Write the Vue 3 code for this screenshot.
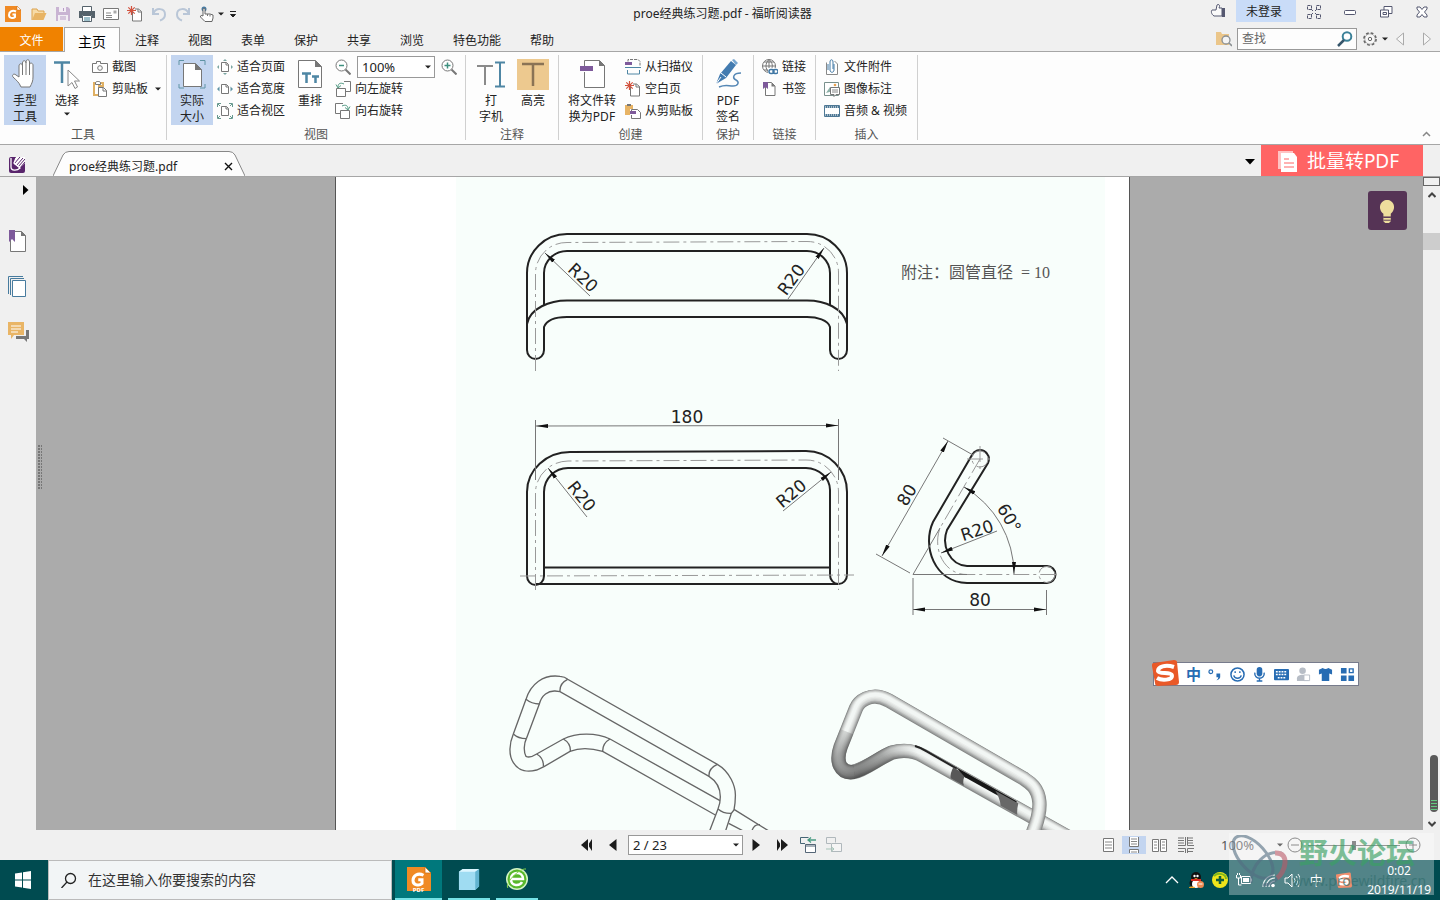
<script setup>
import { h, ref } from 'vue'

// icon markup, 16x16 unless a size is given below
const page = '<path d="M3.500 1.500h6l3.500 3.500v9.500h-9.500z" fill="#fff" stroke="#777"/><path d="M9.500 1.500v4h3.500z" fill="#777"/>'
const star = '<path d="M4.500 0v9M0 4.500h9M1.300 1.300l6.400 6.400M7.700 1.300L1.300 7.700" stroke="#d2533f" stroke-width="1.200"/>'
const icons = {
  foxit: '<path d="M0 0h12l4 4v12H0z" fill="#f08a24"/><path d="M12 0v4h4z" fill="#fff" stroke="#c76b12" stroke-width=".5"/><path d="M11 5.500C7 3.500 4 6 4 9s4 4 6 2V8.500H7.500" fill="none" stroke="#fff" stroke-width="2"/>',
  folder: '<path d="M1 14V3h5l1 2h6v3" fill="#f7dba7" stroke="#dca34f"/><path d="M1 14l3-7h11.500l-3 7z" fill="#e8b465"/>',
  save: '<path d="M1 1h12l2 2v12H1z" fill="#c9b4d3"/><path d="M4 1h7v5H4zM3 9h10v6H3z" fill="#f2eef4"/><path d="M8.500 2v3M5 11h6M5 13h6" stroke="#b79dc4"/>',
  print: '<path d="M3.500 5V.500h9V5" fill="#fff" stroke="#55626b"/><path d="M0 5h16v7h-3V9H3v3H0z" fill="#55626b"/><path d="M3.500 9.500h9v6h-9z" fill="#fff" stroke="#55626b"/><path d="M5 12h6M5 14h6" stroke="#3f8196"/>',
  mail: '<path d="M.500 2.500h15v11H.500z" fill="#fff" stroke="#777"/><path d="M10.500 4.500h3v3h-3z" fill="#aaa"/><path d="M3 7h5M3 9.500h6M3 11.500h6" stroke="#888"/>',
  fresh: '<path d="M5.500 5.500V15h9V5.500L11.500 3H8" fill="#fff" stroke="#777"/><path d="M11 3v3h3.500" fill="none" stroke="#777"/>' + star,
  undo: '<path d="M2 2v6h6" fill="none" stroke="#b9c6d7" stroke-width="2"/><path d="M2.500 7.500C5 1 14 2 14 8.500c0 3-2 5-5 6" fill="none" stroke="#b9c6d7" stroke-width="2"/>',
  redo: '<path d="M14 2v6H8" fill="none" stroke="#b9c6d7" stroke-width="2"/><path d="M13.500 7.500C11 1 2 2 2 8.500c0 3 2 5 5 6" fill="none" stroke="#b9c6d7" stroke-width="2"/>',
  touch: '<circle cx="5" cy="3" r="2.500" fill="#477aa2"/><path d="M4 10V3.500c0-1.500 2-1.500 2 0V8h5l3 1v3l-1 3.500H6L1.500 11C1 9.500 2.500 9 4 10z" fill="#fff" stroke="#666"/><path d="M8.500 8v2M11 8.500v2" stroke="#777"/>',
  caret: '<path d="M4 6h8l-4 4z" fill="#222"/>',
  caretBar: '<path d="M5 5.500h6M5.500 8.500h5l-2.500 2.500z" stroke="#222" fill="#222" stroke-width="1"/>',
  thumb: '<path d="M2 7h4L7 2c1-1 3-.5 2.500 1.500L9 5h3v8H4c-3-2-3-5-2-6z" fill="#fafafa" stroke="#555870"/><path d="M12 5h3v9h-3z" fill="#555870"/>',
  skin: '<path d="M1.500 1.500h4v4h-4zM10.500 1.500h4v4h-4zM1.500 10.500h4v4h-4zM10.500 10.500h4v4h-4z" fill="none" stroke="#555870" stroke-dasharray="3 1"/><path d="M5 5l2 2M11 5L9 7M5 11l2-2M11 11L9 9" stroke="#555870"/>',
  min: '<rect x="2.500" y="6.500" width="11" height="4" rx="1" fill="#fff" stroke="#555870"/>',
  max: '<path d="M6 2.500h8v7h-8z" fill="#fff" stroke="#555870"/><path d="M2.500 6h8v7h-8zM5 8.500h3.500v2H5z" fill="#fff" stroke="#555870"/>',
  close: '<path d="M3 3h3l2 2.500L10 3h3v2l-2.500 3L13 11v2h-3l-2-2.500L6 13H3v-2l2.500-3L3 5z" fill="#fff" stroke="#555870"/>',
  folderFind: '<path d="M0 1h5l1 2h7v11H0z" fill="#ebc68a"/><circle cx="10" cy="9" r="4" fill="#f4f4f4" stroke="#8a8f92" stroke-width="1.300"/><path d="M13 12l3 3" stroke="#8a8f92" stroke-width="1.600"/>',
  find: '<circle cx="10" cy="5.500" r="4.300" fill="#fff" stroke="#3b8198" stroke-width="2"/><path d="M7 9l-6 6" stroke="#36566b" stroke-width="2.500"/>',
  gear: '<circle cx="8" cy="8" r="5.800" fill="#f7f7f7" stroke="#666" stroke-width="2.200" stroke-dasharray="2.600 1.955"/><circle cx="8" cy="8" r="5.200" fill="#f7f7f7" stroke="#888" stroke-width=".6"/><circle cx="8" cy="8" r="1.700" fill="none" stroke="#666"/>',
  prev: '<path d="M11.500 2v12l-7-6z" fill="#f6f6f6" stroke="#aaa"/>',
  next: '<path d="M4.500 2v12l7-6z" fill="#f6f6f6" stroke="#aaa"/>',
  hand: '<path d="M10 19V8c0-3 3.500-3 3.500 0V5c0-3 3.500-3 3.500 0V4c0-3 3.500-3 3.500 0v3c0-3 3.500-2 3.500 0v12c0 4-1 6-3 10H12c-2-5-5-7-8-10-1.500-2 1-4 3-2z" fill="#fff" stroke="#777"/><path d="M13.500 8v9M17 5v12M20.500 7v10" stroke="#777" fill="none"/>',
  select: '<path d="M3 4.500h16M11 4.500V25" stroke="#4e86a4" stroke-width="2.500" fill="none"/><path d="M17 12v16l4-3.500 3 6 2.500-1.500-3-6h5z" fill="#fff" stroke="#888"/>',
  camera: '<path d="M.500 4.500h4v-2h4v2h7v9H.500z" fill="#fff" stroke="#777"/><circle cx="8" cy="9" r="2.300" fill="#fff" stroke="#777"/>',
  clip: '<path d="M2 2h9v3H7v9H2z" fill="#fff" stroke="#dfb064" stroke-width="2"/><path d="M3.500 3.500V2C3.500-.200 8.500-.200 8.500 2v1.500z" fill="#fff" stroke="#777"/><path d="M6.500 6.500h5l3 3v6h-8z" fill="#fff" stroke="#777"/><path d="M11 6.500v3.500h3.500" fill="none" stroke="#777"/>',
  actual: '<path d="M3 7V2.500h5M24 2.500h5V7M3 26v4h5M24 30h5v-4" fill="none" stroke="#5f93a4"/><path d="M7.500 5.500h12l6 6v17h-18z" fill="#fff" stroke="#777"/><path d="M19 5v7h7z" fill="#777"/>',
  fitPage: '<path d="M4.500 3.500h5l2 2v7h-7z" fill="#fff" stroke="#777"/><path d="M9 3.500V6h2.500" fill="none" stroke="#777"/><path d="M6 2l2-2 2 2M6 14l2 2 2-2M2 6L0 8l2 2M14 6l2 2-2 2" fill="#7ba6a2"/>',
  fitWidth: '<path d="M4.500 3.500h5l2 2v7h-7z" fill="#fff" stroke="#777"/><path d="M9 3.500V6h2.500" fill="none" stroke="#777"/><path d="M2.500 5.500L0 8l2.500 2.500M13.500 5.500L16 8l-2.500 2.500" fill="#5f93a4"/>',
  fitView: '<path d="M4.500 3.500h5l2 2v7h-7z" fill="#fff" stroke="#777"/><path d="M9 3.500V6h2.500" fill="none" stroke="#777"/><path d="M.500 4V.500H4M12 .500h3.500V4M.500 12v3.500H4M12 15.500h3.500V12M1 1l2 2M15 1l-2 2M1 15l2-2M15 15l-2-2" fill="none" stroke="#66998f"/>',
  reflow: '<path d="M4.500 2.500h17l6 6v21h-23z" fill="#fff" stroke="#777"/><path d="M21 2v7h7z" fill="#777"/><path d="M8 15.500h9M12.500 15v10M18 18.500h7M21.500 18v7" stroke="#4e86a4" stroke-width="2.500"/>',
  zoomOut: '<circle cx="6.500" cy="6.500" r="5.500" fill="#fff" stroke="#777"/><path d="M4 6.500h5" stroke="#3f907f" stroke-width="1.500"/><path d="M10.500 10.500l5 5" stroke="#777" stroke-width="2"/>',
  zoomIn: '<circle cx="6.500" cy="6.500" r="5.500" fill="#fff" stroke="#777"/><path d="M3.500 6.500h6M6.500 3.500v6" stroke="#3f907f" stroke-width="1.500"/><path d="M10.500 10.500l5 5" stroke="#777" stroke-width="2"/>',
  rotL: '<path d="M9 .500h6.500v10H11" fill="#fff" stroke="#777"/><path d="M1.500 7.500h9v8h-9z" fill="#fff" stroke="#777"/><path d="M3 6C3 2 6 1.500 9 3M1 3.500L3 7l3-2.500" fill="none" stroke="#529a83"/>',
  rotR: '<path d="M8 .500H.500v10H5" fill="#fff" stroke="#777"/><path d="M5.500 7.500h9v8h-9z" fill="#fff" stroke="#777"/><path d="M13 6c0-4-3-4.500-6-3M15 3.500L13 7l-3-2.500" fill="none" stroke="#529a83"/>',
  typewriter: '<path d="M2 8h16M10 8v19" stroke="#8a8a8a" stroke-width="2"/><path d="M20 4.500h10M20 28.500h10M25 4v25" stroke="#4e86a4" stroke-width="2"/>',
  highlight: '<path d="M0 1h32v31H0z" fill="#edc98f"/><path d="M5 6h22M16 6v22" stroke="#8a7355" stroke-width="2.500"/>',
  convert: '<path d="M8.500 10V2.500h15l5 5v22h-20V14" fill="#fff" stroke="#777"/><path d="M23 2v6h6z" fill="#777"/><path d="M4 8h13v5H4z" fill="#7e5a9b"/>',
  scanner: '<path d="M3 2.500V.500h10l2 2v4" fill="none" stroke="#777" stroke-dasharray="3 1"/><path d="M0 3h7v3H0z" fill="#7e5a9b"/><path d="M0 8.500h16M2.500 11v4h12v-4" fill="none" stroke="#4e86a4"/>',
  fromClip: '<path d="M0 2h8v4H5v6H0z" fill="#e8b465"/><path d="M2 1h4v2H2z" fill="#777"/><path d="M6.500 8V6.500h6l3 3v6h-9V12" fill="#fff" stroke="#777"/><path d="M5 8h6v3H5z" fill="#7e5a9b"/>',
  sign: '<path d="M19 3l5 4-10 13-10 6 4-10z" fill="#437bb0"/><path d="M20 2l2-1 4 4-2 2z" fill="#76a5cf"/><path d="M9 15l5 4M4 26l5-7" stroke="#fff"/><path d="M29 15c-8 0-9 5-5 7s2 6-3 6-7-2-14 1" fill="none" stroke="#5587b5" stroke-width="1.500"/>',
  link: '<circle cx="7" cy="7" r="6.500" fill="#fff" stroke="#777"/><path d="M.500 7h13M7 .500v13M2 3h10M2 11h7M7 .500C3 4 3 10 7 13.500M7 .500C11 4 11 8 9 11" fill="none" stroke="#777"/><path d="M6 9h11v7H6z" fill="#fff"/><rect x="7" y="10.500" width="5" height="4" rx="2" fill="none" stroke="#4178a5" stroke-width="1.500"/><rect x="11" y="10.500" width="5" height="4" rx="2" fill="none" stroke="#4178a5" stroke-width="1.500"/>',
  bookmark: page + '<path d="M1 1h5v7L3.500 6 1 8z" fill="#7e5a9b"/>',
  attach: '<path d="M2.500 3.500v12h11V5l-3-3" fill="#fff" stroke="#888"/><path d="M10 5v6c0 3-4 3-4 0V3c0-3 3-3 3 0v7M4 5v6" fill="none" stroke="#4178a5"/>',
  image: '<path d="M.500 1.500h14v13H.500z" fill="#fff" stroke="#79908c"/><path d="M2 12l4-6 3 4z" fill="#8cb0a7"/><circle cx="11" cy="4" r="1.300" fill="#e8a14f"/><path d="M6.500 6.500h9v7H12l-2 2v-2H6.500z" fill="#fff" stroke="#777"/><path d="M8 9h6M8 11h6" stroke="#888"/>',
  film: '<path d="M.500 2.500h15v11H.500z" fill="#fff" stroke="#4e7895"/><path d="M1 4h14M1 12h14" stroke="#4e7895" stroke-width="2"/><path d="M1 4h14M1 12h14" stroke="#fff" stroke-dasharray="1 1"/>',
  phantom: '<rect width="16" height="16" rx="2" fill="#59256c"/><path d="M7 0h9v6l-5 5-6-4z" fill="#fff"/><path d="M5 7l6-7M7 9l7-8M9 10l7-8M11 11l5-6" stroke="#59256c"/><path d="M2 1v9c0 4 6 4 9 1L5 6l2-5" fill="none" stroke="#fff" stroke-width="1.300"/>',
  pages: '<path d="M.500 18V.500H15M2.500 19V2.500H16" fill="none" stroke="#477b9e"/><path d="M4.500 4.500h13v16h-13z" fill="#fff" stroke="#477b9e"/>',
  sideMark: '<path d="M2.500 1.500h11l4 4v16h-15z" fill="#fff" stroke="#777"/><path d="M13 1v5h5z" fill="#777"/><path d="M1 0h6v12l-3-3-3 3z" fill="#7e5a9b"/>',
  comments: '<path d="M0 0h16v13H6l-3 4v-4H0z" fill="#e9b566"/><path d="M3 4h10M3 7h10M3 10h7" stroke="#fff"/><path d="M18 8h3v9h-2v3l-3-3H8v-3h10z" fill="#777"/>',
  first: '<path d="M9 2v12L2 8z" fill="#1c1c1c"/><path d="M13 2v12l-4-6z" fill="#1c1c1c"/><path d="M9.500 2v12" stroke="#f0f0f0"/>',
  back: '<path d="M11.500 2v12L4 8z" fill="#1c1c1c"/>',
  forward: '<path d="M4.500 2v12L12 8z" fill="#1c1c1c"/>',
  last: '<path d="M7 2v12l7-6zM3 2v12l4-6z" fill="#1c1c1c"/><path d="M6.500 2v12" stroke="#f0f0f0"/>',
  viewBack: '<path d="M5 6.500H.500v-6h8" fill="none" stroke="#456575"/><path d="M5.500 7.500h10v8h-10z" fill="#fff" stroke="#567"/><path d="M5 9h11" stroke="#567"/><path d="M16 3H8M11 .500L8 3l3 2.500" fill="none" stroke="#489b82" stroke-width="1.300"/>',
  viewNext: '<path d="M5 6.500H.500v-6h9v5" fill="none" stroke="#b0b8bc"/><path d="M5.500 6.500h10v8h-10z" fill="#f5f5f5" stroke="#b0b8bc"/><path d="M0 12h8M5 9.500L8 12l-3 2.500" fill="none" stroke="#a7c4b8"/>',
  single: '<path d="M3.500 1.500h10v13h-10z" fill="#fff" stroke="#777"/><path d="M5 5h7M5 8h7M5 11h7" stroke="#888"/>',
  continuous: '<path d="M3.500 0v9.500h9V0M3.500 16v-3.500h9V16" fill="#fff" stroke="#777"/><path d="M5 2h6M5 4.500h6M5 7h6M5 15h6" stroke="#888"/>',
  facing: '<path d="M.500 2.500h6v12h-6zM8.500 2.500h6v12h-6z" fill="#fff" stroke="#777"/><path d="M2 5h3M2 8h3M2 11h3M10 5h3M10 8h3M10 11h3" stroke="#888"/>',
  facingCont: '<path d="M0 1h6M0 3.500h6M0 6h6M0 8.500h7.500V0M9.500 0v8.500H16M10 1h5M10 3.500h5M10 6h5M0 11.500h7.500V16M16 11.500H9.500V16M0 14.500h6M10 14.500h5" fill="none" stroke="#777"/>',
  bulb: '<path d="M8 19v-3C1 10 5 1 12 1s11 9 4 15v3z" fill="#eedd9d"/><path d="M8 20h8v4l-2 2h-4l-2-2z" fill="#eedd9d"/><path d="M8 20h8M8 23h8" stroke="#553355"/>',
  batch: '<path d="M1 1h15v18H1z" fill="#ffc3c3"/><path d="M4 3h13l3 4v15H4z" fill="#fff"/><path d="M7 9h5M7 13h10M7 17h10" stroke="#ff6464"/>',
  windows: '<path d="M0 2.500l7-1v7H0zM8 1.300L16 0v8.500H8zM0 9.500h7v7l-7-1zM8 9.500h8V18l-8-1.300z" fill="#fff"/>',
  search: '<circle cx="9.500" cy="6.500" r="5" fill="none" stroke="#222" stroke-width="1.300"/><path d="M6 10l-5.500 6" stroke="#222" stroke-width="1.300"/>',
  cube: '<path d="M2 5l4-3h17v18l-4 4H2z" fill="#9fdcf2"/><path d="M2 5l4-3h17l-4 3z" fill="#dcf6ff"/><path d="M19 5l4-3v18l-4 4z" fill="#62b4d0"/>',
  ebrowser: '<circle cx="12" cy="12" r="11" fill="#d4f5c6"/><circle cx="12" cy="12" r="9.500" fill="#58b72b"/><path d="M6 12h12c0-8-12-8-12 0s9 7 11 3" fill="none" stroke="#fff" stroke-width="2.500"/><path d="M3 21C-1 17 14 1 21 2" fill="none" stroke="#88d44c"/>',
  up: '<path d="M2 11l6-6 6 6" fill="none" stroke="#fff" stroke-width="1.300"/>',
  qq: '<ellipse cx="8" cy="5" rx="5" ry="5" fill="#111"/><ellipse cx="8" cy="11" rx="6.500" ry="5" fill="#111"/><ellipse cx="8" cy="12" rx="4" ry="4" fill="#fff"/><circle cx="6.500" cy="4" r="1.200" fill="#fff"/><circle cx="9.500" cy="4" r="1.200" fill="#fff"/><path d="M3 7h10v2H3z" fill="#d62c22"/><path d="M6 6h4l-2 1z" fill="#f5a623"/><ellipse cx="4" cy="15.500" rx="3" ry="1" fill="#f5a623"/><circle cx="12.500" cy="12.500" r="3.500" fill="#ef8a52"/><path d="M10.500 12h4" stroke="#fff"/>',
  shield: '<circle cx="8" cy="8" r="8" fill="#efe51b"/><path d="M2 4c4-4 12-2 12 3" fill="none" stroke="#83b81b" stroke-width="2"/><path d="M8 4v8M4 8h8" stroke="#125c3b" stroke-width="2.500"/>',
  battery: '<path d="M5.500 4.500h9v7h-9zM15.500 6.500v3" fill="none" stroke="#fff"/><path d="M7 6h6v4H7z" fill="#fff"/><path d="M.500 3v3h4V3M2.500 6v7h3M1.500 1v2M3.500 1v2" fill="none" stroke="#fff"/>',
  wifi: '<path d="M3 15C3 8 8 3 15 3M6 15c0-5 4-9 9-9M9 15c0-3 3-6 6-6" fill="none" stroke="#e5eeee" stroke-width="1.200"/><circle cx="13" cy="13.500" r="1.800" fill="#fff"/>',
  volume: '<path d="M1 6v5h3l4 4V2L4 6z" fill="none" stroke="#fff"/><path d="M10 6q2 2.500 0 5M12 4q3.500 4.500 0 9M14 2q5 6.500 0 13" fill="none" stroke="#dce8e8"/>',
  sogou: '<path d="M2 4l20-3c2 0 3 1 3 2l2 20c0 2-1 3-3 3L6 27c-2 0-3-1-3-3L0 7c0-2 0-3 2-3z" fill="#e95928"/><path d="M22 8C13 5 6 8 6 12c1 4 14 0 14 5 0 4-10 5-15 2" fill="none" stroke="#fff" stroke-width="4"/>',
  punct: '<circle cx="3" cy="5" r="2" fill="none" stroke="#276cb3" stroke-width="1.300"/><path d="M9 7h4v4q-1 3-4 3 2-1 2-3H9z" fill="#276cb3"/>',
  smile: '<circle cx="8" cy="8" r="7" fill="none" stroke="#276cb3" stroke-width="1.600"/><path d="M5.500 4.500v2M10.500 4.500v2M4 9c1 4 7 4 8 0" fill="none" stroke="#276cb3" stroke-width="1.500"/>',
  mic: '<rect x="5" y="0" width="6" height="10" rx="3" fill="#276cb3"/><path d="M3 6c-1 8 11 8 10 0M8 12v3M5 15h6" fill="none" stroke="#276cb3" stroke-width="1.500"/>',
  keyboard: '<rect x="0" y="2" width="16" height="12" rx="1" fill="#276cb3"/><path d="M2 5h12M2 8h12M4 11.500h8" stroke="#fff" stroke-width="1.500" stroke-dasharray="2 1"/>',
  person: '<circle cx="7" cy="4" r="3.500" fill="#b7bdc6"/><path d="M1 15v-3c0-5 12-5 12 0v3z" fill="#b7bdc6"/><path d="M8.500 8.500h6v6h-6z" fill="#fff" stroke="#b7bdc6"/>',
  shirt: '<path d="M1 3l4-2q3 2 6 0l4 2v5l-3-1v8H4V7L1 8z" fill="#276cb3"/>',
  grid: '<path d="M1 1h6v6H1zM1 9h6v6H1zM9 9h6v6H9z" fill="#276cb3"/><path d="M10 2h4v4h-4z" fill="none" stroke="#276cb3" stroke-width="1.500"/>',
}

const Icon = ({ name, size = 16, box = 16 }) =>
  h('svg', { width: size, height: size, viewBox: `0 0 ${box} ${box}`, 'aria-hidden': 'true', innerHTML: icons[name] })
Icon.props = ['name', 'size', 'box']

const quick = ['folder', 'save', 'print', 'mail', 'fresh', 'undo', 'redo', 'touch']
const tabs = ['主页', '注释', '视图', '表单', '保护', '共享', '浏览', '特色功能', '帮助']
const activeTab = ref('主页')
const zoom = ref('100%')
const pageNo = ref('2 / 23')
const zoomLevel = ref(50)

const imeTools = ['punct', 'smile', 'mic', 'keyboard', 'person', 'shirt', 'grid']
const layouts = ['single', 'continuous', 'facing', 'facingCont']

// strokes from the rim of the tube to its highlight: width, colour, shift up
const shades = [
  [43, '#858786', 0], [39, '#9b9d9c', 1], [35, '#b0b2b1', 2], [31, '#c2c4c3', 3],
  [27, '#d1d4d2', 3], [22, '#dee1df', 4], [17, '#e9ecea', 5], [11, '#f2f6f4', 6],
]
const lowerTube = 'M125 306C165 300 205 265 245 248C280 238 315 244 340 258L780 504'
const upperTube = 'M668 490C688 440 690 415 688 395C684 350 655 335 640 325L235 91C180 62 145 98 138 115L92 230C76 275 90 312 132 306'
</script>

<template>
  <div class="app">
    <header class="titlebar">
      <div class="quick">
        <Icon name="foxit" class="logo" />
        <button v-for="q in quick" :key="q" :aria-label="q"><Icon :name="q" /></button>
        <button class="slim" aria-label="more"><Icon name="caret" size="12" /></button>
        <button class="slim" aria-label="customize"><Icon name="caretBar" /></button>
      </div>
      <h1>proe经典练习题.pdf - 福昕阅读器</h1>
      <div class="window">
        <button aria-label="like"><Icon name="thumb" /></button>
        <button class="login">未登录</button>
        <button v-for="w in ['skin', 'min', 'max', 'close']" :key="w" class="win" :aria-label="w"><Icon :name="w" /></button>
      </div>
    </header>

    <nav class="tabs">
      <button class="file">文件</button>
      <button v-for="t in tabs" :key="t" class="tab" :class="{ active: t == activeTab }" @click="activeTab = t">{{ t }}</button>
      <div class="tools">
        <button aria-label="folder search"><Icon name="folderFind" /></button>
        <div class="find">
          <input type="text" placeholder="查找" aria-label="查找" />
          <button aria-label="search"><Icon name="find" /></button>
        </div>
        <button aria-label="settings"><Icon name="gear" /></button>
        <button aria-label="settings menu"><Icon name="caret" size="12" /></button>
        <button aria-label="previous"><Icon name="prev" /></button>
        <button class="nextbtn" aria-label="next"><Icon name="next" /></button>
      </div>
    </nav>

    <section class="ribbon">
      <div class="group g-tools">
        <div class="body">
          <button class="big on"><Icon name="hand" size="32" box="32" /><span>手型<br />工具</span></button>
          <button class="big"><Icon name="select" size="32" box="32" /><span>选择</span><Icon name="caret" size="12" class="drop" /></button>
          <div class="col">
            <button class="small"><Icon name="camera" />截图</button>
            <button class="small"><Icon name="clip" />剪贴板<Icon name="caret" size="12" /></button>
          </div>
        </div>
        <div class="name">工具</div>
      </div>
      <div class="group g-view">
        <div class="body">
          <button class="big on"><Icon name="actual" size="32" box="32" /><span>实际<br />大小</span></button>
          <div class="col">
            <button class="small"><Icon name="fitPage" />适合页面</button>
            <button class="small"><Icon name="fitWidth" />适合宽度</button>
            <button class="small"><Icon name="fitView" />适合视区</button>
          </div>
          <button class="big"><Icon name="reflow" size="32" box="32" /><span>重排</span></button>
          <div class="col">
            <div class="zoomrow">
              <button aria-label="zoom out"><Icon name="zoomOut" /></button>
              <div class="combo">
                <select v-model="zoom" aria-label="zoom"><option>100%</option><option>125%</option></select>
                <Icon name="caret" size="12" />
              </div>
              <button aria-label="zoom in"><Icon name="zoomIn" /></button>
            </div>
            <button class="small"><Icon name="rotL" />向左旋转</button>
            <button class="small"><Icon name="rotR" />向右旋转</button>
          </div>
        </div>
        <div class="name">视图</div>
      </div>
      <div class="group g-note">
        <div class="body">
          <button class="big"><Icon name="typewriter" size="32" box="32" /><span>打<br />字机</span></button>
          <button class="big"><Icon name="highlight" size="32" box="32" /><span>高亮</span></button>
        </div>
        <div class="name">注释</div>
      </div>
      <div class="group g-create">
        <div class="body">
          <button class="big wide"><Icon name="convert" size="32" box="32" /><span>将文件转<br />换为PDF</span></button>
          <div class="col">
            <button class="small"><Icon name="scanner" />从扫描仪</button>
            <button class="small"><Icon name="fresh" />空白页</button>
            <button class="small"><Icon name="fromClip" />从剪贴板</button>
          </div>
        </div>
        <div class="name">创建</div>
      </div>
      <div class="group g-protect">
        <div class="body">
          <button class="big"><Icon name="sign" size="32" box="32" /><span>PDF<br />签名</span></button>
        </div>
        <div class="name">保护</div>
      </div>
      <div class="group g-link">
        <div class="body">
          <div class="col">
            <button class="small"><Icon name="link" />链接</button>
            <button class="small"><Icon name="bookmark" />书签</button>
          </div>
        </div>
        <div class="name">链接</div>
      </div>
      <div class="group g-insert">
        <div class="body">
          <div class="col">
            <button class="small"><Icon name="attach" />文件附件</button>
            <button class="small"><Icon name="image" />图像标注</button>
            <button class="small"><Icon name="film" />音频 &amp; 视频</button>
          </div>
        </div>
        <div class="name">插入</div>
      </div>
      <button class="collapse" aria-label="collapse">
        <svg width="9" height="6" viewBox="0 0 9 6"><path d="M1 5l3.500-3.500L8 5" fill="none" stroke="#888" stroke-width="1.500" /></svg>
      </button>
    </section>

    <div class="doctabs">
      <Icon name="phantom" class="phantom" />
      <div class="doctab">
        <svg class="shape" viewBox="0 0 192 25" preserveAspectRatio="none">
          <path d="M0 25L10 4Q12 .500 16 .500H176Q180 .500 182 4L192 25" fill="#fdfdfd" stroke="#888" />
        </svg>
        <span>proe经典练习题.pdf</span>
        <button aria-label="close tab">
          <svg width="9" height="9" viewBox="0 0 9 9"><path d="M1 1l7 7M8 1L1 8" stroke="#111" stroke-width="1.400" /></svg>
        </button>
      </div>
      <button class="tablist" aria-label="tab list"><svg width="10" height="6" viewBox="0 0 10 6"><path d="M0 0h10L5 5.500z" /></svg></button>
      <button class="batch"><Icon name="batch" size="22" box="22" />批量转PDF</button>
    </div>

    <main class="main">
      <aside class="side">
        <button aria-label="expand"><svg width="6" height="10" viewBox="0 0 6 10"><path d="M0 0l5.500 5L0 10z" /></svg></button>
        <button aria-label="bookmarks"><Icon name="sideMark" size="22" box="22" /></button>
        <button aria-label="pages"><Icon name="pages" size="22" box="22" /></button>
        <button aria-label="comments"><Icon name="comments" size="22" box="22" /></button>
      </aside>
      <div class="splitter"><i></i></div>

      <div class="canvas">
        <div class="paper">
          <svg class="drawing" viewBox="456 177 649 653">
            <defs>
              <marker id="arrow" viewBox="0 0 12 6" refX="12" refY="3" markerWidth="12" markerHeight="6" markerUnits="userSpaceOnUse" orient="auto-start-reverse">
                <path d="M0 1L12 3 0 5z" fill="#111" />
              </marker>
              <radialGradient id="shadow" gradientUnits="userSpaceOnUse" cx="150" cy="325" r="190">
                <stop offset="0" stop-color="#333" stop-opacity=".65" />
                <stop offset=".5" stop-color="#444" stop-opacity=".45" />
                <stop offset="1" stop-color="#666" stop-opacity="0" />
              </radialGradient>
            </defs>

            <!-- top view -->
            <g class="thick">
              <path d="M527 350V273A40 39 0 0 1 567 234H807A40 39 0 0 1 847 273V350A8.500 9 0 0 1 830 350V327C828 320 817 317 807 317H567C557 317 547 319 544 327V350A8.500 9 0 0 1 527 350" />
              <path d="M544 305V273A23 22 0 0 1 567 251H807A23 22 0 0 1 830 273V305" />
              <path d="M527 324C530 308 550 300.500 567 300.500H807C825 300.500 843 308 847 324" />
            </g>
            <path class="axis" d="M535.500 371V273A31 31 0 0 1 567 242.500L807 241.500A31 31 0 0 1 838.500 273V371" />
            <g class="thin">
              <path d="M590 296L545 253" marker-end="url(#arrow)" />
              <path d="M788 299L824 248" marker-end="url(#arrow)" />
            </g>
            <text class="dim" transform="translate(579 282) rotate(43)">R20</text>
            <text class="dim" transform="translate(796 283) rotate(-54)">R20</text>

            <text class="note" x="901" y="278">附注：圆管直径</text>
            <text class="note" x="1021" y="278">= 10</text>

            <!-- front view -->
            <g class="thick">
              <path d="M527 576V492A43 40 0 0 1 570 452L806 451A41 41 0 0 1 847 492V575A8.500 9 0 0 1 830 575V490A25 22 0 0 0 806 468H568A24 24 0 0 0 544 492V576A8.500 9 0 0 1 527 576" />
              <path d="M544 567.500H830M535 584H839" />
            </g>
            <path class="axis" d="M535.500 590V492A33 32 0 0 1 568 461L806 460A32 32 0 0 1 838.500 492V590M520 576L854 575" />
            <g class="thin">
              <path d="M535.500 420V480M838.500 419V480" />
              <path d="M536 426L838 425.500" marker-start="url(#arrow)" marker-end="url(#arrow)" />
              <path d="M587 517L548 468" marker-end="url(#arrow)" />
              <path d="M783 511L831 472" marker-end="url(#arrow)" />
            </g>
            <text class="dim" x="687" y="423">180</text>
            <text class="dim" transform="translate(577 500) rotate(51)">R20</text>
            <text class="dim" transform="translate(795 498) rotate(-40)">R20</text>

            <!-- side view -->
            <g class="thick">
              <path d="M972 455L933 522C922 546 934 582 967 583H1047A8.500 8.500 0 0 0 1047 566H967C950 565 941 546 947 530L988 463A8.500 8.500 0 0 0 972 455z" />
            </g>
            <path class="axis" d="M980 459L940 528C932 550 945 575 967 574.500H1058M980 446V473M967 459H993" />
            <circle class="axis" cx="980" cy="459" r="8" />
            <circle class="axis" cx="1047" cy="574.500" r="8" />
            <g class="thin">
              <path d="M940 528L913 574.500H967M943 438L973 455M876 554L910 573M913 578V615M1046.500 590V615" />
              <path d="M948 441L882 556" marker-start="url(#arrow)" marker-end="url(#arrow)" />
              <path d="M913 609.500H1046" marker-start="url(#arrow)" marker-end="url(#arrow)" />
              <path d="M964 487A101 101 0 0 1 1014 574" marker-start="url(#arrow)" marker-end="url(#arrow)" />
              <path d="M997 531L941 553" marker-end="url(#arrow)" />
            </g>
            <text class="dim" transform="translate(912 498) rotate(-60)">80</text>
            <text class="dim" transform="translate(979 536) rotate(-18)">R20</text>
            <text class="dim" transform="translate(1004 521) rotate(60)">60°</text>
            <text class="dim" x="980" y="606">80</text>

            <!-- wireframe, drawn at three times its size -->
            <g transform="translate(500 660) scale(.33333)" class="wire">
              <path d="M40 222L78 118C92 72 130 42 180 49Q195 50 203 58L652 313C690 335 708 380 706 410Q706 430 702 450L694 460L676 515" />
              <path d="M79 236L118 132C125 105 145 92 165 93L180 95L627 349C652 365 661 390 661 410Q661 430 654 447L628 515" />
              <path d="M40 222C28 250 25 285 40 308C60 340 90 335 110 330L132 320L210 274C240 262 280 266 308 274L646 465" />
              <path d="M79 236C72 250 70 275 78 289Q90 295 110 282L190 237C230 217 290 218 330 237L660 422" />
              <path d="M78 118Q95 132 118 132M40 222Q55 236 79 236M110 282Q132 295 130 320M190 237Q213 250 211 275M330 237Q307 250 308 275M203 58Q178 70 180 95M652 313Q625 325 627 349M654 447Q670 461 694 460" />
              <path d="M702 448L805 512M686 490L728 512M756 512Q762 492 780 494" />
            </g>

            <!-- shaded model -->
            <g transform="translate(810 670) scale(.33333)" class="tube">
              <path v-for="s in shades" :key="'l' + s[0]" :d="lowerTube" :stroke-width="s[0]" :stroke="s[1]" :transform="`translate(0 -${s[2]})`" />
              <path d="M315 228Q335 234 350 244L440 296" stroke="#222" stroke-width="6" />
              <path d="M430 292L468 315Q455 330 462 347L422 325Q420 310 430 292z" fill="#585858" />
              <path d="M438 292L620 394L618 406L555 372L465 322z" fill="#161616" />
              <path d="M556 362L625 400Q620 420 622 435L572 407Q570 385 556 362z" fill="#686868" />
              <path v-for="s in shades" :key="'u' + s[0]" :d="upperTube" :stroke-width="s[0]" :stroke="s[1]" :transform="`translate(0 -${s[2]})`" />
              <path d="M110 185L92 230C76 275 90 312 132 306C165 300 205 265 245 248C280 238 315 244 340 258" stroke="url(#shadow)" stroke-width="43" />
            </g>
          </svg>
        </div>
        <button class="tip" aria-label="tips"><Icon name="bulb" size="24" box="26" /></button>
      </div>

      <div class="scroll">
        <i class="split"></i>
        <button aria-label="scroll up"><svg width="8" height="6" viewBox="0 0 8 6"><path d="M.500 5L4 1.500 7.500 5" fill="none" stroke="#444" stroke-width="2" /></svg></button>
        <div class="track"><i class="thumb"></i></div>
        <button aria-label="scroll down"><svg width="8" height="6" viewBox="0 0 8 6"><path d="M.500 1L4 4.500 7.500 1" fill="none" stroke="#444" stroke-width="2" /></svg></button>
        <div class="gauge"><i></i></div>
      </div>
    </main>

    <footer class="status">
      <div class="pager">
        <button aria-label="first page"><Icon name="first" /></button>
        <button aria-label="previous page"><Icon name="back" /></button>
        <div class="combo pagebox">
          <select v-model="pageNo" aria-label="page"><option>2 / 23</option><option>3 / 23</option></select>
          <Icon name="caret" size="12" />
        </div>
        <button aria-label="next page"><Icon name="forward" /></button>
        <button aria-label="last page"><Icon name="last" /></button>
        <button aria-label="previous view"><Icon name="viewBack" /></button>
        <button aria-label="next view"><Icon name="viewNext" /></button>
      </div>
      <div class="view">
        <button v-for="l in layouts" :key="l" class="layout" :class="{ on: l == 'continuous' }" :aria-label="l"><Icon :name="l" /></button>
        <button class="percent">100%<Icon name="caret" size="12" /></button>
        <button class="round" aria-label="zoom out">
          <svg width="16" height="16" viewBox="0 0 16 16"><circle cx="8" cy="8" r="7" fill="none" stroke="#555" /><path d="M4 8h8" stroke="#555" /></svg>
        </button>
        <input v-model="zoomLevel" type="range" min="0" max="100" aria-label="zoom level" />
        <button class="round" aria-label="zoom in">
          <svg width="16" height="16" viewBox="0 0 16 16"><circle cx="8" cy="8" r="7" fill="none" stroke="#555" /><path d="M4 8h8M8 4v8" stroke="#555" /></svg>
        </button>
      </div>
    </footer>

    <div class="taskbar">
      <button class="start" aria-label="start"><Icon name="windows" size="18" box="18" /></button>
      <label class="search">
        <Icon name="search" />
        <input type="text" placeholder="在这里输入你要搜索的内容" />
      </label>
      <button class="task active" aria-label="Foxit"><Icon name="foxit" size="24" /><b>PDF</b></button>
      <button class="task" aria-label="cube"><Icon name="cube" size="24" box="25" /></button>
      <button class="task" aria-label="browser"><Icon name="ebrowser" size="24" box="24" /></button>
      <div class="tray">
        <button v-for="t in ['up', 'qq', 'shield', 'battery', 'wifi', 'volume']" :key="t" :aria-label="t"><Icon :name="t" /></button>
        <button class="lang">中</button>
        <button class="ime" aria-label="sogou"><Icon name="sogou" box="27" /></button>
        <div class="clock">0:02<br />2019/11/19</div>
      </div>
    </div>

    <div class="imebar">
      <Icon name="sogou" size="28" box="28" class="imelogo" />
      <button class="zh">中</button>
      <button v-for="i in imeTools" :key="i" :aria-label="i"><Icon :name="i" size="15" /></button>
    </div>

    <div class="watermark">
      <svg width="60" height="56" viewBox="0 0 60 56" fill="none">
        <ellipse cx="24" cy="22" rx="26" ry="13" transform="rotate(48 24 22)" stroke="#536d82" stroke-width="3" />
        <path d="M22 48C22 30 36 15 52 18C62 24 52 50 34 50" stroke="#536d82" stroke-width="3" />
        <path d="M46 18C62 17 56 38 48 43" stroke="#bb5968" stroke-width="5" />
      </svg>
      <div><strong>野火论坛</strong><span>www.proewildfire.cn</span></div>
    </div>
  </div>
</template>

<style>
body {
  margin: 0;
  overflow: hidden;
}
</style>

<style scoped>
.app {
  position: relative;
  display: flex;
  flex-direction: column;
  height: 100vh;
  background: #f0f0f0;
  color: #222;
  font: 12px/16px "Noto Sans", "Noto Sans CJK SC", sans-serif;
}
button, input, select {
  margin: 0;
  padding: 0;
  border: 0;
  background: none;
  color: inherit;
  font: inherit;
  outline: none;
  border-radius: 0;
}
button {
  display: flex;
  align-items: center;
  justify-content: center;
  flex: none;
  white-space: nowrap;
}
svg {
  display: block;
  flex: none;
}

/* title bar */
.titlebar {
  display: grid;
  grid-template-columns: 1fr auto 1fr;
  height: 27px;
  padding-left: 5px;
}
.quick {
  display: flex;
  align-items: center;
  gap: 8px;
}
.quick .logo {
  margin-right: 2px;
}
.quick .slim {
  width: 12px;
  margin-left: -8px;
}
h1 {
  margin: 0;
  font-size: 12px;
  font-weight: 400;
  line-height: 28px;
}
.window {
  display: flex;
  justify-content: flex-end;
  height: 22px;
}
.login {
  width: 60px;
  margin: 0 0 0 10px;
  padding: 2px 4px 0 0;
  box-sizing: border-box;
  background: #c9dcf8;
}
.win {
  width: 36px;
  padding-top: 2px;
}

/* tab row */
.tabs {
  display: flex;
  gap: 1px;
  height: 25px;
  box-sizing: border-box;
  border-bottom: 1px solid #a6a6a6;
}
.file {
  width: 63px;
  padding-top: 4px;
  background: #f08200;
  color: #fff;
}
.tab {
  padding: 4px 14px 0;
}
.tab.active {
  height: 25px;
  padding: 3px 13px 0;
  border: 1px solid #a6a6a6;
  border-bottom: 0;
  box-sizing: border-box;
  background: #fdfdfd;
  color: #000;
  font-size: 14px;
}
.tools {
  display: flex;
  align-items: center;
  gap: 5px;
  margin-left: auto;
  padding-right: 5px;
}
.find {
  display: flex;
  width: 120px;
  height: 22px;
  padding: 0 3px 0 4px;
  box-sizing: border-box;
  border: 1px solid #999;
  background: #fdfdfd;
}
.find input {
  flex: 1;
  width: 0;
}
.find input::placeholder {
  color: #666;
}
.tools > button + button {
  margin-left: -4px;
}
.tools > .nextbtn {
  margin-left: 6px !important;
}

/* ribbon */
.ribbon {
  position: relative;
  display: flex;
  height: 93px;
  box-sizing: border-box;
  padding-top: 3px;
  background: #fdfdfd;
  border-bottom: 1px solid #a6a6a6;
}
.group {
  display: flex;
  flex-direction: column;
  box-sizing: border-box;
  height: 85px;
  padding: 0 4px;
  border-right: 1px solid #d0d0d0;
}
.g-tools { width: 167px; }
.g-view { width: 299px; }
.g-note { width: 93px; }
.g-create { width: 144px; }
.g-protect { width: 51px; }
.g-link { width: 62px; }
.g-insert { width: 102px; }
.body {
  display: flex;
  flex: none;
  height: 72px;
}
.name {
  flex: none;
  text-align: center;
  color: #555;
}
.big {
  flex-direction: column;
  justify-content: flex-start;
  width: 42px;
  height: 70px;
  padding-top: 3px;
  gap: 3px;
  box-sizing: border-box;
}
.big.on {
  background: #c3d5f0;
}
.big.wide {
  width: 58px;
}
.big .drop {
  margin-top: -4px;
}
.col {
  display: flex;
  flex-direction: column;
  align-items: flex-start;
  padding: 1px 4px 0;
}
.small {
  height: 22px;
  gap: 4px;
}
.zoomrow {
  display: flex;
  align-items: center;
  gap: 6px;
  height: 22px;
}
.combo {
  position: relative;
  width: 78px;
  height: 22px;
}
.combo select {
  width: 100%;
  height: 100%;
  padding: 0 4px;
  border: 1px solid #999;
  background: #fff;
  appearance: none;
  font-size: 13px;
}
.combo svg {
  position: absolute;
  right: 1px;
  top: 5px;
  pointer-events: none;
}
.collapse {
  align-self: flex-end;
  margin: 0 9px 7px auto;
}

/* document tabs */
.doctabs {
  display: flex;
  align-items: flex-end;
  height: 32px;
  box-sizing: border-box;
  border-bottom: 1px solid #a6a6a6;
}
.phantom {
  margin: 0 28px 3px 9px;
}
.doctab {
  position: relative;
  display: flex;
  align-items: center;
  justify-content: space-between;
  width: 192px;
  height: 25px;
  padding: 6px 12px 0 16px;
  box-sizing: border-box;
}
.shape {
  position: absolute;
  inset: 0;
  width: 100%;
  height: 100%;
}
.doctab span,
.doctab button {
  position: relative;
}
.tablist {
  margin: 0 6px 11px auto;
}
.batch {
  width: 162px;
  height: 31px;
  margin-right: 17px;
  padding-right: 8px;
  gap: 8px;
  box-sizing: border-box;
  background: #ff6464;
  color: #fff;
  font-size: 19px;
}

/* work area */
.main {
  display: flex;
  flex: 1;
  min-height: 0;
}
.side {
  display: flex;
  flex-direction: column;
  align-items: center;
  width: 36px;
  padding: 8px 0 0 2px;
  box-sizing: border-box;
}
.side button {
  margin-bottom: 24px;
}
.side button:first-child {
  align-self: flex-end;
  margin: 0 7px 35px 0;
}
.splitter {
  display: flex;
  align-items: center;
  width: 6px;
  padding-left: 2px;
  box-sizing: border-box;
  background: #ababab;
}
.splitter i {
  width: 4px;
  height: 44px;
  margin-bottom: 74px;
  background: radial-gradient(circle at 1px 1px, #777 1px, transparent 1px) 0 0 / 3px 3px;
}
.canvas {
  position: relative;
  display: flex;
  justify-content: center;
  flex: 1;
  overflow: hidden;
  background: #ababab;
}
.paper {
  flex: none;
  width: 795px;
  box-sizing: border-box;
  padding-left: 120px;
  border: solid #555;
  border-width: 0 1px;
  background: #fff;
}
.drawing {
  width: 649px;
  height: 653px;
  background: #f8fefb;
}
.thick {
  fill: none;
  stroke: #222;
  stroke-width: 2;
}
.thin {
  fill: none;
  stroke: #777;
  stroke-width: 1;
}
.axis {
  fill: none;
  stroke: #999;
  stroke-width: 1;
  stroke-dasharray: 16 4 3 4;
}
.dim {
  fill: #222;
  font: 17px "DejaVu Sans", sans-serif;
  text-anchor: middle;
}
.note {
  fill: #555;
  font: 16px "Liberation Serif", "Noto Sans CJK SC", serif;
}
.wire {
  fill: none;
  stroke: #666;
  stroke-width: 4;
}
.tube {
  fill: none;
}
.tip {
  position: absolute;
  top: 14px;
  right: 16px;
  width: 39px;
  height: 39px;
  border-radius: 3px;
  background: #553355;
}
.scroll {
  position: relative;
  display: flex;
  flex-direction: column;
  width: 17px;
}
.split {
  height: 7px;
  border: 1px solid #666;
}
.scroll button {
  height: 12px;
}
.split + button {
  margin-top: 3px;
}
.track {
  flex: 1;
  padding-top: 32px;
}
.thumb {
  display: block;
  height: 17px;
  background: #cdcdcd;
}
.gauge {
  position: absolute;
  right: 2px;
  bottom: 18px;
  display: flex;
  align-items: flex-end;
  width: 8px;
  height: 57px;
  border-radius: 4px;
  background: #5a5a5a;
  overflow: hidden;
}
.gauge i {
  width: 6px;
  height: 11px;
  margin: 0 1px 1px;
  background: repeating-linear-gradient(#64c882 0 1px, #5a5a5a 1px 3px);
}

/* status bar */
.status {
  display: grid;
  grid-template-columns: 1fr auto 1fr;
  align-items: center;
  height: 30px;
}
.pager {
  display: flex;
  grid-column: 2;
  align-items: center;
  gap: 10px;
  padding-right: 19px;
}
.combo.pagebox {
  width: 115px;
  height: 20px;
  margin: 0 -5px 0 -3px;
}
.pagebox svg {
  top: 4px;
}
.view {
  display: flex;
  align-items: center;
  justify-content: flex-end;
  padding-right: 19px;
}
.layout {
  width: 24px;
  height: 18px;
  margin-right: 2px;
}
.layout.on {
  background: #c3d5f0;
}
.percent {
  justify-content: space-between;
  width: 65px;
  margin: 0 1px 0 21px;
  color: #555;
  font-size: 13px;
}
.view input {
  width: 92px;
  height: 16px;
  margin: 0 5px;
  appearance: none;
}
.view input::-webkit-slider-runnable-track {
  height: 1px;
  background: #666;
}
.view input::-webkit-slider-thumb {
  width: 4px;
  height: 9px;
  margin-top: -4px;
  appearance: none;
  background: #555;
}

/* taskbar */
.taskbar {
  display: flex;
  height: 40px;
  background: #004b50;
  color: #fff;
}
.start {
  width: 48px;
}
.search {
  display: flex;
  align-items: center;
  gap: 11px;
  width: 344px;
  padding-left: 12px;
  margin-right: 3px;
  box-sizing: border-box;
  border: 1px solid #bbb;
  background: #f2f5f6;
  color: #222;
}
.search input {
  flex: 1;
  font-size: 14px;
}
.search input::placeholder {
  color: #333;
}
.task {
  position: relative;
  width: 42px;
  height: 40px;
  margin-left: 6px;
  box-sizing: border-box;
  border-bottom: 2px solid #76e2e6;
}
.task.active {
  width: 47px;
  margin-left: 0;
  background: #00787c;
}
.task b {
  position: absolute;
  bottom: 5px;
  color: #fff;
  font-size: 6px;
  line-height: 6px;
}
.tray {
  display: flex;
  align-items: center;
  gap: 8px;
  margin-left: auto;
  padding-right: 9px;
}
.lang {
  width: 16px;
  font-size: 13px;
}
.ime {
  margin: 0 7px 0 4px;
}
.clock {
  text-align: center;
  line-height: 19px;
}

/* floating input method bar */
.imebar {
  position: absolute;
  top: 662px;
  right: 81px;
  display: flex;
  align-items: center;
  gap: 7px;
  width: 206px;
  height: 24px;
  padding: 0 5px 0 32px;
  box-sizing: border-box;
  border: 1px solid #777b8c;
  background: #fff;
}
.imelogo {
  position: absolute;
  left: -2px;
  top: -4px;
}
.zh {
  color: #276cb3;
  font-size: 15px;
  font-weight: 700;
}

.watermark {
  position: absolute;
  right: 6px;
  bottom: 5px;
  display: flex;
  width: 205px;
  height: 62px;
  background: rgba(255, 255, 255, .32);
  pointer-events: none;
}
.watermark svg {
  margin-top: 2px;
  opacity: .6;
}
.watermark div {
  display: flex;
  flex-direction: column;
  margin-left: 3px;
}
.watermark strong {
  margin-left: 7px;
  color: #3ba064;
  font-size: 29px;
  line-height: 40px;
  opacity: .65;
}
.watermark span {
  color: #347070;
  font-size: 14px;
  opacity: .7;
}
</style>
